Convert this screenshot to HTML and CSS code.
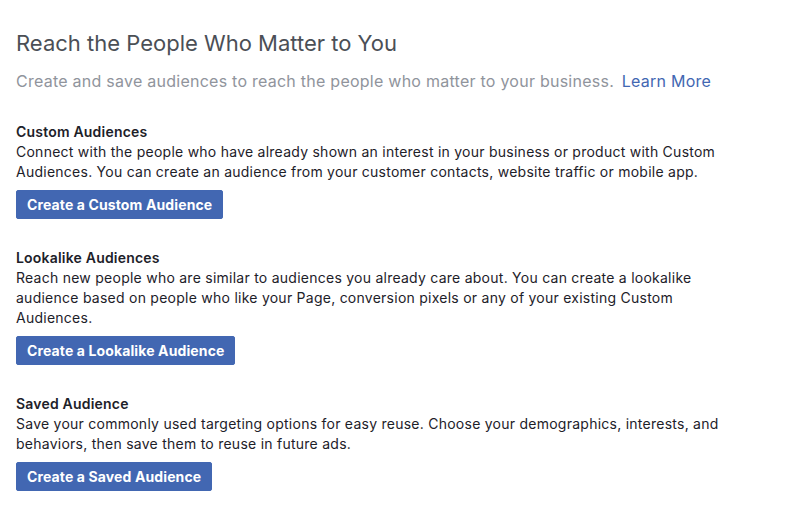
FILE: index.html
```html
<!DOCTYPE html>
<html lang="en">
<head>
  <meta charset="UTF-8">
  <meta name="viewport" content="width=device-width, initial-scale=1.0">
  <title>Audiences</title>
  <link rel="stylesheet" href="styles.css">
</head>
<body>
  <div class="container">
    <h1 class="title">Reach the People Who Matter to You</h1>
    <p class="intro">Create and save audiences to reach the people who matter to your business. <a href="#">Learn More</a></p>

    <div class="section">
      <h2>Custom Audiences</h2>
      <p>Connect with the people who have already shown an interest in your business or product with Custom Audiences. You can create an audience from your customer contacts, website traffic or mobile app.</p>
      <button class="btn">Create a Custom Audience</button>
    </div>

    <div class="section">
      <h2>Lookalike Audiences</h2>
      <p>Reach new people who are similar to audiences you already care about. You can create a lookalike audience based on people who like your Page, conversion pixels or any of your existing Custom Audiences.</p>
      <button class="btn">Create a Lookalike Audience</button>
    </div>

    <div class="section">
      <h2>Saved Audience</h2>
      <p>Save your commonly used targeting options for easy reuse. Choose your demographics, interests, and behaviors, then save them to reuse in future ads.</p>
      <button class="btn">Create a Saved Audience</button>
    </div>
  </div>
</body>
</html>
```

FILE: styles.css
```css
/* General Styles */
body {
  font-family: Inter, "Liberation Sans", sans-serif;
  background-color: #ffffff;
  color: #1d2129;
  margin: 0;
  padding: 0;
}

.container {
  max-width: 720px;
  padding: 29px 16px 0;
}

.title {
  font-size: 22px;
  line-height: 28px;
  font-weight: normal;
  color: #4b4f56;
  margin: 0 0 14px;
}

.intro {
  font-size: 16px;
  line-height: 20px;
  letter-spacing: 0.25px;
  color: #90949c;
  margin: 0 0 31px;
}

.intro a {
  color: #4267b2;
  text-decoration: none;
  margin-left: 3px;
}

.section {
  margin-bottom: 29px;
}

.section h2 {
  font-size: 14px;
  line-height: 20px;
  font-weight: 600;
  letter-spacing: 0.2px;
  margin: 0;
}

.section p {
  font-size: 14px;
  line-height: 20px;
  letter-spacing: 0.25px;
  margin: 0 0 8px;
}

.btn {
  display: block;
  height: 29px;
  padding: 0 10px;
  background-color: #4267b2;
  border: 1px solid #4267b2;
  border-radius: 2px;
  color: #ffffff;
  font-family: inherit;
  font-size: 14px;
  font-weight: bold;
  letter-spacing: 0.12px;
  cursor: pointer;
}
```
